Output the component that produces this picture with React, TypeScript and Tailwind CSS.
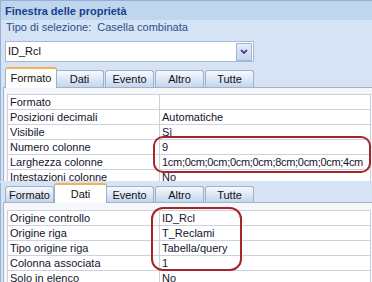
import React from 'react';

const topRows: [string, string][] = [
    ['Formato', ''],
    ['Posizioni decimali', 'Automatiche'],
    ['Visibile', 'Sì'],
    ['Numero colonne', '9'],
    ['Larghezza colonne', '1cm;0cm;0cm;0cm;0cm;8cm;0cm;0cm;4cm'],
    ['Intestazioni colonne', 'No'],
];

const bottomRows: [string, string][] = [
    ['Origine controllo', 'ID_Rcl'],
    ['Origine riga', 'T_Reclami'],
    ['Tipo origine riga', 'Tabella/query'],
    ['Colonna associata', '1'],
    ['Solo in elenco', 'No'],
];

const tabNames = ['Formato', 'Dati', 'Evento', 'Altro', 'Tutte'];

const TabStrip = ({ active, compact }: { active: number; compact?: boolean }) => (
    <div className={`flex items-end gap-[1px] pl-[4px] ${compact ? 'mt-[2px]' : 'mt-[5px]'}`}>
        {tabNames.map((name, i) => {
            if (i === active) {
                return (
                    <div
                        key={name}
                        className={`relative z-10 -mb-px flex items-center justify-center rounded-t-[3px] border-x border-t-2 border-x-[#9fb0c7] border-t-[#f5b04f] bg-white ${
                            compact ? 'h-[20px]' : 'h-[21px]'
                        } ${i === 0 ? 'w-[52px] -mr-[3px]' : 'w-[53px] -ml-[1px] -mr-[3px]'}`}
                    >
                        {name}
                    </div>
                );
            }
            return (
                <div
                    key={name}
                    className={`flex w-[49px] items-center justify-center rounded-t-[3px] border border-b-0 border-[#9fb0c7] bg-gradient-to-b from-[#f7faff] to-[#c3d6ee] pt-px ${
                        compact ? 'h-[16px]' : 'h-[17px]'
                    }`}
                >
                    {name}
                </div>
            );
        })}
    </div>
);

const PropTable = ({ rows }: { rows: [string, string][] }) => (
    <div className="w-[364px] border-x border-t border-[#cbd2dc] bg-white text-[#14142e]">
        {rows.map(([label, value]) => (
            <div key={label} className="flex h-[15px] border-b border-[#cbd2dc] leading-[14px]">
                <div className="w-[152px] shrink-0 border-r border-[#cbd2dc] pl-[2px] whitespace-nowrap">{label}</div>
                <div className={`flex-1 overflow-hidden pl-[2px] whitespace-nowrap ${value.length > 20 ? 'tracking-[-0.3px]' : ''}`}>
                    {value}
                </div>
            </div>
        ))}
    </div>
);

const Panel = ({ rows, top }: { rows: [string, string][]; top: string }) => (
    <div className={`ml-[2px] border-l border-t border-[#a3b2c6] bg-[#f5f7fa] pl-[3px] ${top}`}>
        <PropTable rows={rows} />
    </div>
);

export default function App() {
    return (
        <div className="relative h-[282px] w-[372px] overflow-hidden bg-[#d5e3f4] font-['Liberation_Sans',Arial,sans-serif] text-[11px] text-[#111]">
            {/* first capture: Formato tab */}
            <div className="h-[181px] overflow-hidden border-l border-t border-[#93b1da]">
                <div className="flex h-[19px] items-center bg-[#c0d5ee] pl-[4px] pt-[2px] font-bold text-[#15428b]">
                    Finestra delle proprietà
                </div>
                <div className="flex h-[15px] items-center pl-[5px] whitespace-pre text-[#2b5088]">
                    {'Tipo di selezione:  Casella combinata'}
                </div>
                <div className="ml-[4px] mt-[6px] flex h-[21px] w-[249px] items-center border border-[#a9bad0] bg-white pl-[2px] pr-[1px]">
                    <span className="flex-1">ID_Rcl</span>
                    <div className="flex h-[18px] w-[16px] items-center justify-center border border-[#a3b7d3] bg-gradient-to-b from-[#e4edf8] to-[#c4d6ee]">
                        <svg width="8" height="5" viewBox="0 0 8 5">
                            <path d="M1 1 L4 4 L7 1" fill="none" stroke="#4f3f8f" strokeWidth="1.8" />
                        </svg>
                    </div>
                </div>
                <TabStrip active={0} />
                <Panel rows={topRows} top="pt-[6px]" />
            </div>

            {/* second capture: Dati tab */}
            <div className="border-l border-[#93b1da]">
                <TabStrip active={1} compact />
                <Panel rows={bottomRows} top="pt-[7px]" />
            </div>

            {/* red annotations */}
            <div className="absolute left-[153px] top-[136px] h-[37px] w-[218px] rounded-[10px] border-2 border-[#a3262a]" />
            <div className="absolute left-[151px] top-[207px] h-[64px] w-[91px] rounded-[12px] border-2 border-[#a3262a]" />
        </div>
    );
}
